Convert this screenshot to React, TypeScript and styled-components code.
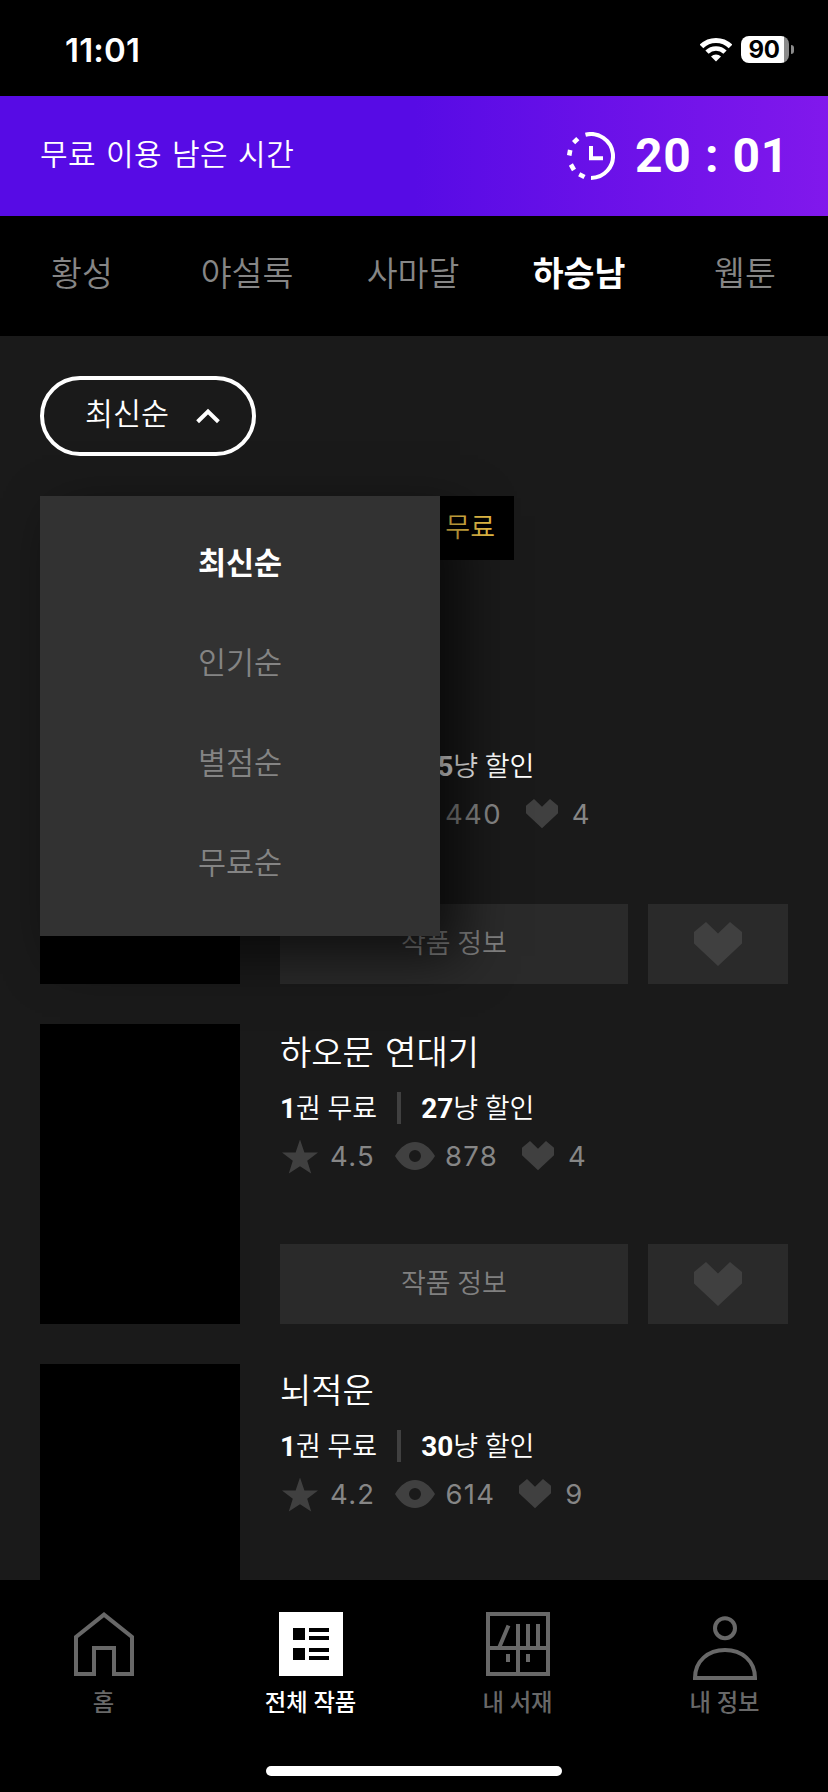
import React from 'react';
import styled, { createGlobalStyle } from 'styled-components';

const GlobalStyle = createGlobalStyle`
  * { box-sizing: border-box; }
  body {
    margin: 0;
    background: #000;
    color: #fff;
    font-family: Roboto, "Noto Sans CJK KR", sans-serif;
  }
  button { font: inherit; color: inherit; border: 0; padding: 0; background: none; }
  svg { display: block; flex: none; }
`;

const Screen = styled.div`
  display: flex;
  flex-direction: column;
  width: 828px;
  height: 1792px;
  overflow: hidden;
  background: #000;
`;

const StatusBar = styled.header`
  flex: none;
  display: flex;
  align-items: center;
  height: 96px;
  padding: 3px 34px 0 65px;
  font-family: Inter, sans-serif;
`;

const StatusTime = styled.span`
  flex: 1;
  font-size: 33px;
  font-weight: 600;
  letter-spacing: 0.2px;
`;

const Battery = styled.div`
  display: flex;
  align-items: center;
  gap: 2px;
  margin-left: 9px;
`;

const BatteryBody = styled.div`
  width: 48px;
  height: 27px;
  padding-right: 2px;
  border-radius: 8px;
  background: linear-gradient(90deg, #fff 43px, #8a8a8a 43px);
  color: #000;
  font-size: 24px;
  font-weight: 700;
  letter-spacing: -0.4px;
  line-height: 27px;
  text-align: center;
`;

const BatteryTip = styled.div`
  width: 3px;
  height: 9px;
  border-radius: 0 4px 4px 0;
  background: #8a8a8a;
`;

const TimerBanner = styled.section`
  flex: none;
  display: flex;
  align-items: center;
  height: 120px;
  padding: 0 40px;
  background: linear-gradient(90deg, #570be5 50%, #8118ec 100%);
`;

const BannerLabel = styled.span`
  flex: 1;
  padding-bottom: 3px;
  font-size: 30px;
  font-weight: 350;
  letter-spacing: 0.5px;
  word-spacing: 2px;
  line-height: 44px;
`;

const Countdown = styled.span`
  margin-left: 20px;
  width: 153px;
  font-size: 48px;
  font-weight: 700;
  letter-spacing: 0.8px;
  word-spacing: 0.5px;
  line-height: 56px;
  white-space: nowrap;
`;

const Tabs = styled.nav`
  flex: none;
  display: flex;
  height: 120px;
  background: #000;
`;

const Tab = styled.button<{ $active?: boolean }>`
  flex: 0 0 166px;
  height: 110px;
  font-size: 33.6px;
  font-weight: ${p => (p.$active ? 700 : 350)};
  color: ${p => (p.$active ? '#fff' : '#868686')};
  &:first-child { flex-basis: 164px; }
`;

const Content = styled.main`
  position: relative;
  flex: 1;
  min-height: 0;
  overflow: hidden;
  padding: 40px 40px 0;
  background: #1a1a1a;
`;

const SortButton = styled.button`
  display: flex;
  align-items: center;
  justify-content: space-between;
  width: 216px;
  height: 80px;
  padding: 0 32px 0 41px;
  border: 4px solid #fff;
  border-radius: 40px;
  font-size: 30.4px;
  font-weight: 350;
  span { padding-bottom: 8px; }
`;

const SortMenu = styled.ul`
  position: absolute;
  top: 160px;
  left: 40px;
  z-index: 2;
  width: 400px;
  height: 440px;
  margin: 0;
  padding: 20px 0;
  list-style: none;
  background: #323232;
  box-shadow: 20px 20px 50px rgba(0, 0, 0, 0.65);
`;

const SortOption = styled.li<{ $active?: boolean }>`
  height: 100px;
  line-height: 96px;
  text-align: center;
  font-size: 30.5px;
  font-weight: ${p => (p.$active ? 700 : 350)};
  color: ${p => (p.$active ? '#fff' : '#848484')};
`;

const List = styled.div`
  display: flex;
  flex-direction: column;
  gap: 40px;
  margin-top: 40px;
`;

const Card = styled.article<{ $tall?: boolean }>`
  flex: none;
  display: flex;
  gap: 40px;
  height: ${p => (p.$tall ? 488 : 300)}px;
`;

const Cover = styled.div`
  flex: none;
  width: 200px;
  background: #000;
`;

const Info = styled.div`
  flex: 1;
  display: flex;
  flex-direction: column;
`;

const Badge = styled.div`
  align-self: flex-start;
  width: 234px;
  height: 64px;
  margin-bottom: 124px;
  padding-right: 19px;
  background: #000;
  color: #e8bf48;
  font-size: 27px;
  font-weight: 350;
  line-height: 64px;
  text-align: right;
`;

const Title = styled.h2<{ $long?: boolean }>`
  margin: 0;
  height: ${p => (p.$long ? 54 : 52)}px;
  padding-top: ${p => (p.$long ? 4 : 2)}px;
  font-size: 34px;
  font-weight: 350;
  line-height: 50px;
  word-spacing: 3px;
`;

const Offers = styled.div`
  display: flex;
  align-items: center;
  height: 32px;
  margin-top: 14px;
  font-size: 27px;
  font-weight: 350;
  line-height: 32px;
  white-space: nowrap;
  span { padding-top: 1px; }
  strong { font-size: 28px; font-weight: 700; }
`;

const Divider = styled.i`
  width: 4px;
  height: 32px;
  margin: 0 20px;
  background: #404040;
`;

const Stats = styled.div`
  display: flex;
  align-items: center;
  height: 40px;
  margin-top: 12px;
  color: #868686;
  font-family: Inter, sans-serif;
  font-size: 27.5px;
  letter-spacing: 1.3px;
  svg { margin-right: 10px; }
`;

const Stat = styled.span`
  display: flex;
  align-items: center;
  margin-right: 20px;
  &:last-child svg { margin: 0 14px 0 4px; }
`;

const Actions = styled.div`
  display: flex;
  gap: 20px;
  height: 80px;
  margin-top: auto;
`;

const InfoButton = styled.button`
  flex: 1;
  background: #2a2a2a;
  color: #808080;
  font-size: 27px;
  font-weight: 350;
  padding-bottom: 6px;
`;

const LikeButton = styled.button`
  display: flex;
  align-items: center;
  justify-content: center;
  width: 140px;
  background: #2a2a2a;
`;

const BottomNav = styled.nav`
  flex: none;
  display: grid;
  grid-template-columns: repeat(4, 1fr);
  grid-template-rows: 186px 10px;
  justify-items: center;
  height: 212px;
  background: #000;
`;

const NavItem = styled.button<{ $active?: boolean }>`
  display: flex;
  flex-direction: column;
  align-items: center;
  align-self: start;
  gap: 10px;
  padding-top: 32px;
  color: ${p => (p.$active ? '#fff' : '#686868')};
  font-size: 23.3px;
  font-weight: 500;
  line-height: 34px;
  svg { overflow: visible; }
`;

const HomeIndicator = styled.div`
  grid-column: 1 / -1;
  width: 296px;
  height: 10px;
  border-radius: 5px;
  background: #fff;
`;

const WifiIcon = () => (
  <svg width="32" height="25" viewBox="0 0 32 25">
    <path d="M1.500 9.400a20.500 20.500 0 0 1 29 0" fill="none" stroke="#fff" strokeWidth="5" />
    <path d="M7 15.200a12.700 12.700 0 0 1 18 0" fill="none" stroke="#fff" strokeWidth="4.600" />
    <path d="M11 19.400a7.200 7.200 0 0 1 10 0L16 24.6z" fill="#fff" />
  </svg>
);

const TimerIcon = () => (
  <svg width="48" height="48" viewBox="0 0 48 48" fill="none" stroke="#fff" strokeWidth="4">
    <path d="M18.5 2.7A22 22 0 1 1 24 46" />
    <path d="M17.5 45 12.2 42.3M7 38 3.9 32.5M2.2 23.5 3.2 18M6.6 10.6 10.8 6.6" strokeWidth="4.6" />
    <path d="M24 14v12.2h12" />
  </svg>
);

const ChevronUp = () => (
  <svg width="24" height="16" viewBox="0 0 24 16" fill="none" stroke="#fff" strokeWidth="4">
    <path d="M1.6 13.8 12 3.6l10.4 10.2" />
  </svg>
);

const HeartIcon = ({ width }: { width: number }) => (
  <svg width={width} height={(width * 44) / 48} viewBox="0 0 48 44" fill="#404040">
    <path d="M12 0 24 11.5 36 0 48 10V21.5L24 44 0 21.5V10z" />
  </svg>
);

const StarIcon = () => (
  <svg width="40" height="40" viewBox="0 0 40 40" fill="#404040">
    <path d="M20 3.6 24.4 16.4 38 16.6 27.2 24.8 31.2 37.4 20 30.2 8.8 37.4 12.8 24.8 2 16.6 15.6 16.4z" />
  </svg>
);

const EyeIcon = () => (
  <svg width="40" height="28" viewBox="0 0 40 28" fill="#404040" fillRule="evenodd">
    <path d="M0 14C5.5 5 12 0 20 0s14.500 5 20 14c-5.500 9-12 14-20 14S5.500 23 0 14zM20 8a6 6 0 1 0 0 12 6 6 0 0 0 0-12z" />
  </svg>
);

const HomeIcon = () => (
  <svg width="64" height="64" viewBox="0 0 64 64" fill="none" stroke="currentColor" strokeWidth="4">
    <path d="M4 62V25L32 2.600 60 25V62H42V36H22V62z" />
  </svg>
);

const CatalogIcon = () => (
  <svg width="64" height="64" viewBox="0 0 64 64" fill="currentColor" fillRule="evenodd">
    <path d="M0 0h64v64H0zM14 16v12h12V16zM14 36v12h12V36zM30 16v4h20v-4zM30 24v4h20v-4zM30 36v4h20v-4zM30 44v4h20v-4z" />
  </svg>
);

const ShelfIcon = () => (
  <svg width="64" height="64" viewBox="0 0 64 64" fill="none" stroke="currentColor" strokeWidth="4">
    <path d="M2 2h60v60H2zM2 36h60M32 12v50M42 12v24M52 12v24M22.500 13.500 13 36M22 42v8M42 42v8" />
  </svg>
);

const PersonIcon = () => (
  <svg width="64" height="64" viewBox="0 0 64 64" fill="none" stroke="currentColor" strokeWidth="4">
    <circle cx="32" cy="16.200" r="10" />
    <path d="M2 66C2 49 15 38 32 38s30 11 30 28z" />
  </svg>
);

interface Work {
  title: string;
  discount: number;
  rating: string;
  views: number;
  likes: number;
  badge?: string;
}

const works: Work[] = [
  { title: '', discount: 25, rating: '4.5', views: 440, likes: 4, badge: '무료' },
  { title: '하오문 연대기', discount: 27, rating: '4.5', views: 878, likes: 4 },
  { title: '뇌적운', discount: 30, rating: '4.2', views: 614, likes: 9 },
];

const WorkCard = ({ work }: { work: Work }) => (
  <Card $tall={!!work.badge}>
    <Cover />
    <Info>
      {work.badge && <Badge>{work.badge}</Badge>}
      <Title $long={work.title.includes(' ')}>{work.title}</Title>
      <Offers>
        <span><strong>1</strong>권 무료</span>
        <Divider />
        <span><strong>{work.discount}</strong>냥 할인</span>
      </Offers>
      <Stats>
        <Stat><StarIcon />{work.rating}</Stat>
        <Stat><EyeIcon />{work.views}</Stat>
        <Stat><HeartIcon width={32} />{work.likes}</Stat>
      </Stats>
      <Actions>
        <InfoButton>작품 정보</InfoButton>
        <LikeButton><HeartIcon width={48} /></LikeButton>
      </Actions>
    </Info>
  </Card>
);

const tabs = ['황성', '야설록', '사마달', '하승남', '웹툰'];
const sortOptions = ['최신순', '인기순', '별점순', '무료순'];

export default function App() {
  return (
    <Screen>
      <GlobalStyle />
      <StatusBar>
        <StatusTime>11:01</StatusTime>
        <WifiIcon />
        <Battery>
          <BatteryBody>90</BatteryBody>
          <BatteryTip />
        </Battery>
      </StatusBar>
      <TimerBanner>
        <BannerLabel>무료 이용 남은 시간</BannerLabel>
        <TimerIcon />
        <Countdown>20 : 01</Countdown>
      </TimerBanner>
      <Tabs>
        {tabs.map(t => <Tab key={t} $active={t === '하승남'}>{t}</Tab>)}
      </Tabs>
      <Content>
        <SortButton><span>최신순</span><ChevronUp /></SortButton>
        <SortMenu>
          {sortOptions.map(o => <SortOption key={o} $active={o === '최신순'}>{o}</SortOption>)}
        </SortMenu>
        <List>
          {works.map((w, i) => <WorkCard key={i} work={w} />)}
        </List>
      </Content>
      <BottomNav>
        <NavItem><HomeIcon />홈</NavItem>
        <NavItem $active><CatalogIcon />전체 작품</NavItem>
        <NavItem><ShelfIcon />내 서재</NavItem>
        <NavItem><PersonIcon />내 정보</NavItem>
        <HomeIndicator />
      </BottomNav>
    </Screen>
  );
}
